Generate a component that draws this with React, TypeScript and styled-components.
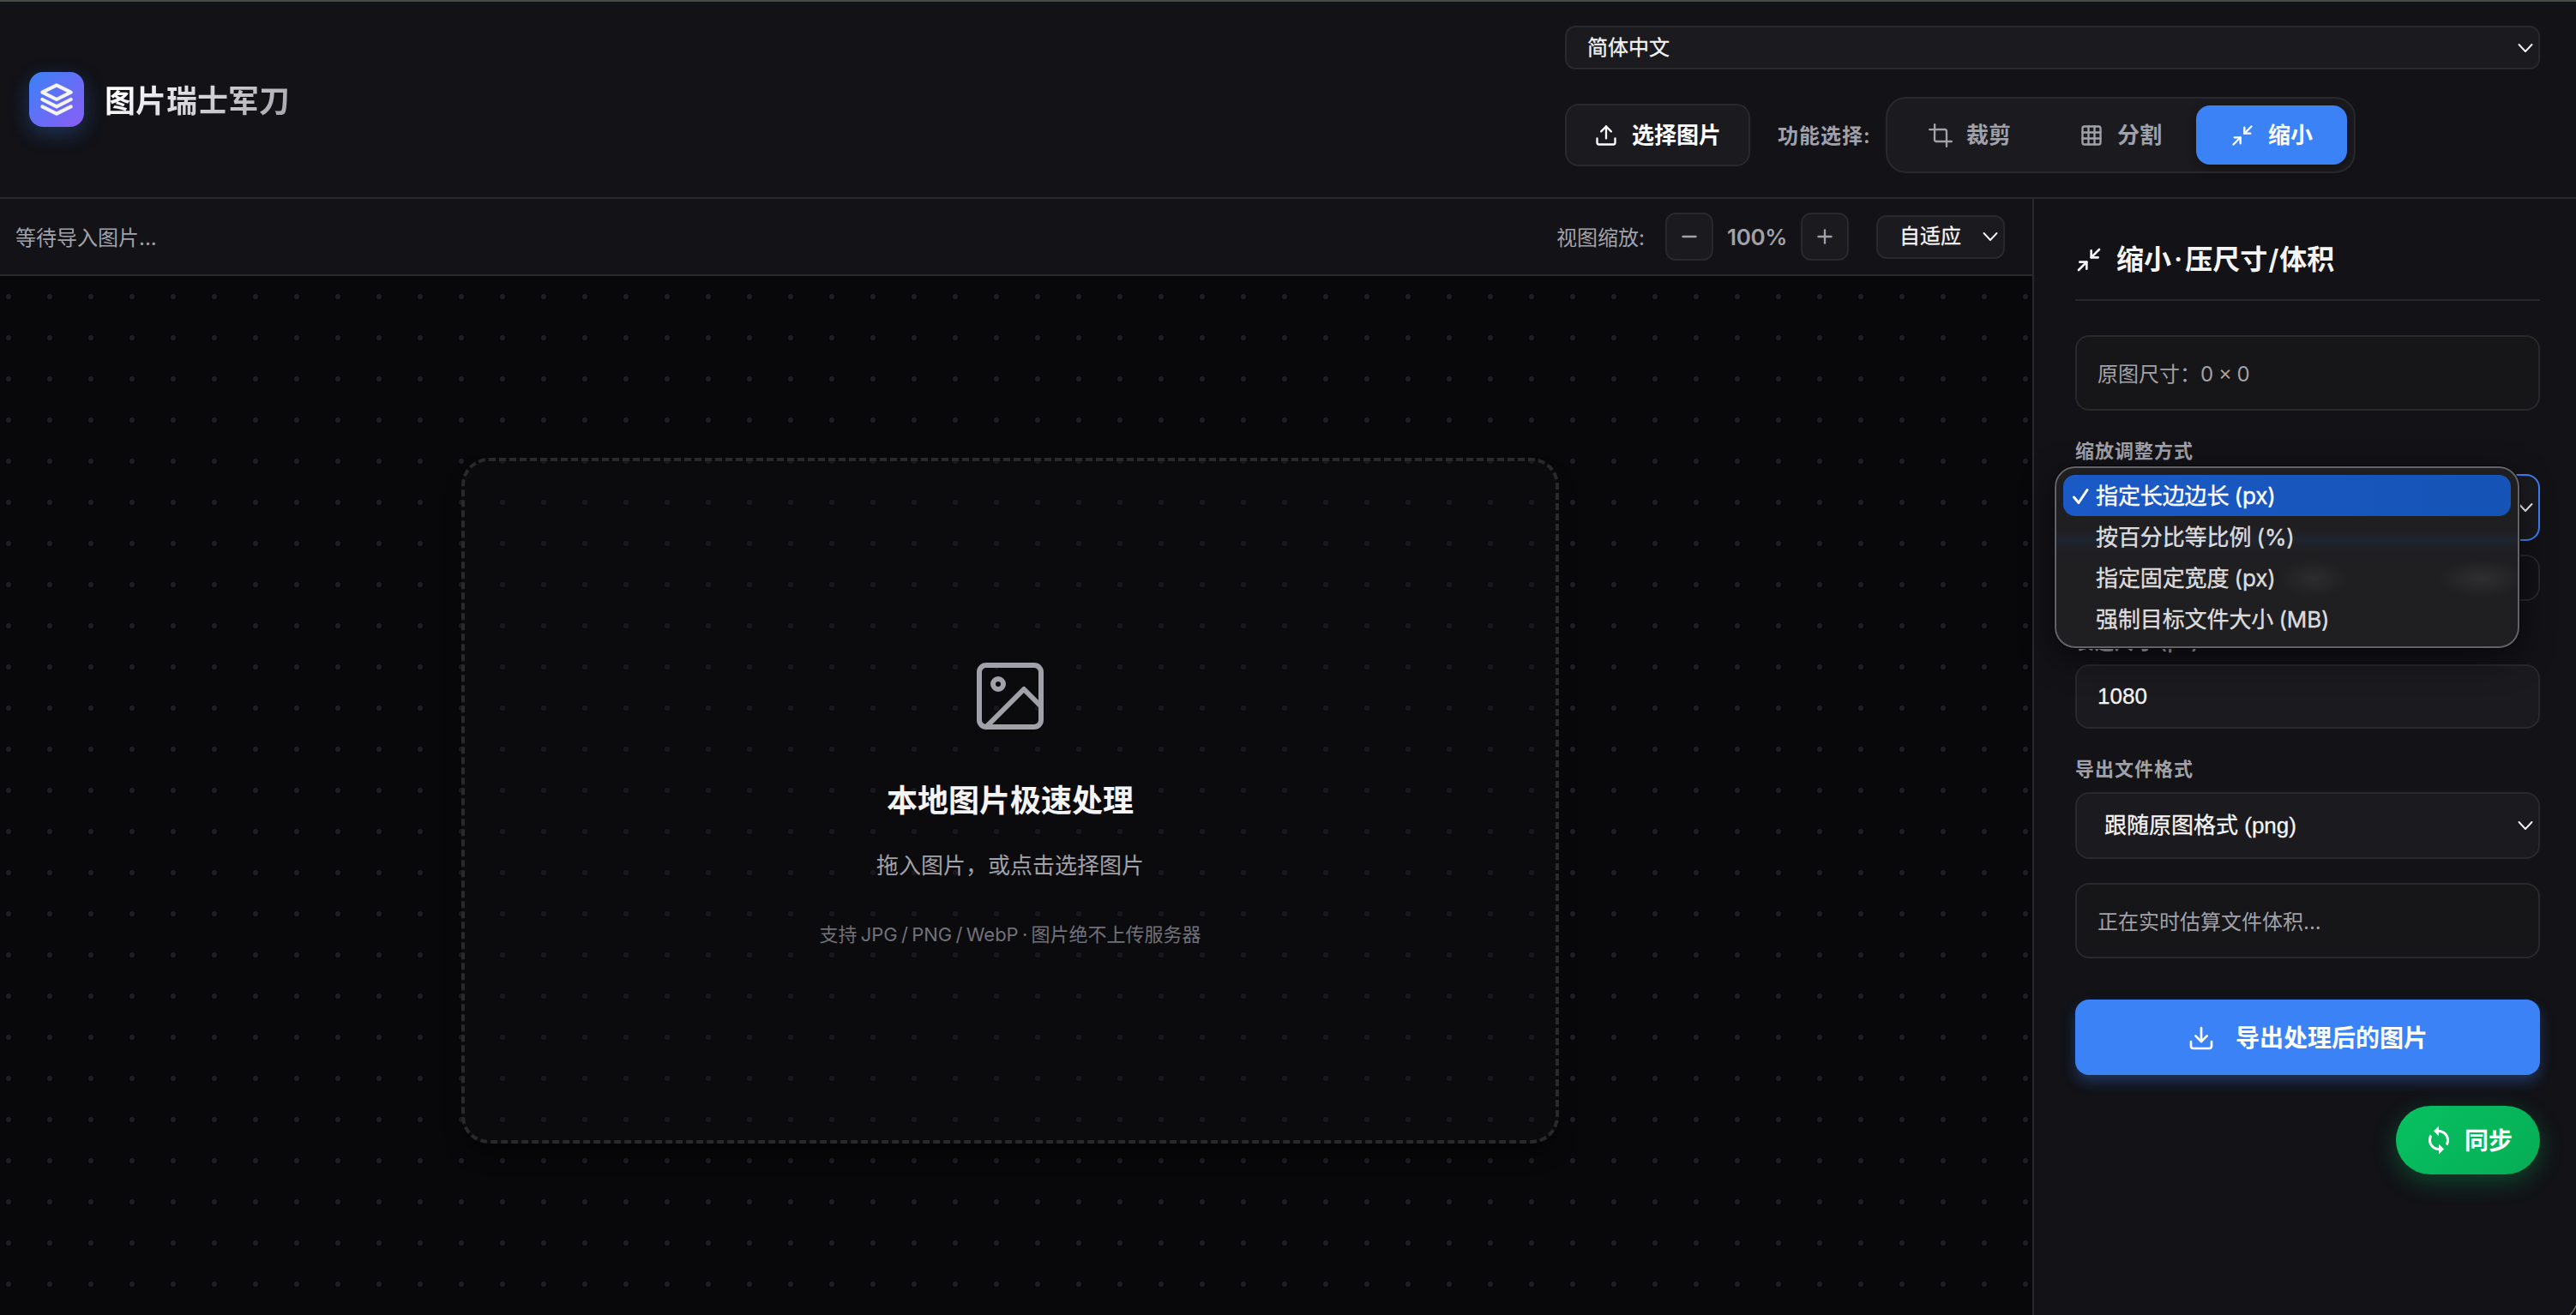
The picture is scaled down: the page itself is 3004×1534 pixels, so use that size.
import React from "react";
import styled, { createGlobalStyle, css } from "styled-components";

const UI = `Inter, "Noto Sans CJK SC", sans-serif`;
const CONTROL = `"Liberation Sans", "Noto Sans CJK SC", sans-serif`;

const c = {
  bg: "#08080a",
  panel: "#121217",
  control: "#1b1b1f",
  info: "#161618",
  line: "#29292c",
  text: "#f4f4f5",
  muted: "#a1a1aa",
  faint: "#71717a",
  accent: "#3b82f6",
};

const GlobalStyle = createGlobalStyle`
  *, *::before, *::after { box-sizing: border-box; }
  body { margin: 0; background: ${c.bg}; color: ${c.text}; font-family: ${UI}; overflow: hidden; }
  button, input { font-family: inherit; margin: 0; }
`;

const Page = styled.div`
  width: 3004px;
  height: 1534px;
  display: flex;
  flex-direction: column;
  overflow: hidden;
  border-top: 2px solid #454c42;
  position: relative;
`;

const Header = styled.header`
  height: 230px;
  flex: none;
  display: flex;
  justify-content: space-between;
  background: ${c.panel};
  border-bottom: 2px solid ${c.line};
  padding: 28px 42px 28px 34px;
`;

const Brand = styled.div`
  display: flex;
  align-items: center;
  align-self: center;
  gap: 24px;
`;

const LogoTile = styled.div`
  width: 64px;
  height: 64px;
  border-radius: 16px;
  display: grid;
  place-items: center;
  background: linear-gradient(135deg, #3b82f6, #8b5cf6);
  box-shadow: 0 8px 24px rgba(59, 130, 246, 0.3);
`;

const BrandName = styled.h1`
  margin: 0;
  padding-top: 3px;
  font-size: 36px;
  line-height: 54px;
  font-weight: 600;
  background: linear-gradient(135deg, #ffffff 10%, ${c.muted});
  -webkit-background-clip: text;
  background-clip: text;
  color: transparent;
`;

const HeaderTools = styled.div`
  width: 1137px;
  display: flex;
  flex-direction: column;
  gap: 32px;
`;

const ToolRow = styled.div`
  display: flex;
  align-items: center;
`;

const Select = styled.div<{ $h: number; $pad: number; $size?: number; $radius?: number; $focus?: boolean; $w?: string }>`
  display: flex;
  align-items: center;
  justify-content: space-between;
  flex: none;
  width: ${(p) => p.$w ?? "100%"};
  height: ${(p) => p.$h}px;
  padding: 0 6px 0 ${(p) => p.$pad}px;
  border: 2px solid ${(p) => (p.$focus ? c.accent : c.line)};
  border-radius: ${(p) => p.$radius ?? 16}px;
  background: ${c.control};
  color: ${c.text};
  font-family: ${CONTROL};
  font-size: ${(p) => p.$size ?? 26}px;
  line-height: 40px;
  -webkit-text-stroke: 0.3px currentColor;
`;

const PickButton = styled.button`
  height: 73px;
  display: flex;
  align-items: center;
  gap: 16px;
  padding: 1px 32px 0;
  border: 2px solid ${c.line};
  border-radius: 16px;
  background: ${c.control};
  color: #fff;
  font-size: 26px;
  line-height: 40px;
  font-weight: 600;
`;

const ToolLabel = styled.span`
  width: 158px;
  padding: 2px 0 0 32px;
  white-space: nowrap;
  font-size: 24px;
  line-height: 36px;
  letter-spacing: 1px;
  font-weight: 600;
  color: ${c.muted};
`;

const Segments = styled.div`
  display: flex;
  padding: 8px;
  border: 2px solid ${c.line};
  border-radius: 24px;
  background: ${c.control};
`;

const Segment = styled.button<{ $active?: boolean }>`
  width: 176px;
  height: 69px;
  display: flex;
  align-items: center;
  justify-content: center;
  gap: 16px;
  padding: 1px 0 0;
  border: 0;
  border-radius: 16px;
  background: transparent;
  color: ${c.muted};
  font-size: 26px;
  line-height: 40px;
  font-weight: 600;
  ${(p) =>
    p.$active &&
    css`
      background: ${c.accent};
      color: #fff;
      box-shadow: 0 4px 12px rgba(0, 0, 0, 0.3);
    `}
`;

const Body = styled.div`
  flex: 1;
  min-height: 0;
  display: flex;
`;

const Workspace = styled.main`
  width: 2384px;
  margin-left: -14px;
  flex: none;
  display: flex;
  flex-direction: column;
`;

const Toolbar = styled.div`
  height: 90px;
  flex: none;
  display: flex;
  align-items: center;
  justify-content: space-between;
  padding: 0 32px;
  background: ${c.panel};
  border-bottom: 2px solid ${c.line};
  color: ${c.muted};
  font-size: 24px;
  line-height: 36px;
`;

const Status = styled.span`
  padding-top: 3px;
`;

const ZoomGroup = styled.div`
  display: flex;
  align-items: center;
`;

const ZoomLabel = styled.span`
  width: 127px;
  padding-top: 3px;
`;

const ZoomButton = styled.button`
  width: 56px;
  height: 56px;
  display: grid;
  place-items: center;
  padding: 0;
  border: 2px solid ${c.line};
  border-radius: 12px;
  background: ${c.control};
  color: ${c.muted};
`;

const ZoomValue = styled.span`
  width: 102px;
  padding-top: 2px;
  text-align: center;
  font-size: 26px;
  font-weight: 600;
  letter-spacing: -0.4px;
`;

const FitWrap = styled.div`
  margin-left: 32px;
`;

const Canvas = styled.section`
  height: 1224px;
  flex: none;
  display: grid;
  place-items: center;
  background: radial-gradient(circle, #1e1e24 2.7px, transparent 3.3px) 0 0 / 48px 48px ${c.bg};
`;

const DropZone = styled.div`
  width: 1280px;
  height: 800px;
  display: flex;
  flex-direction: column;
  align-items: center;
  padding-top: 226px;
  border: 4px dashed ${c.line};
  border-radius: 32px;
  background: rgba(18, 18, 20, 0.4);
  box-shadow: 0 16px 24px -8px rgba(0, 0, 0, 0.6);
`;

const DropTitle = styled.h2`
  margin: 47px 0 0;
  font-size: 36px;
  line-height: 54px;
  font-weight: 600;
`;

const DropText = styled.p`
  margin: 29px 0 0;
  font-size: 26px;
  line-height: 40px;
  color: ${c.muted};
`;

const DropHint = styled.p`
  margin: 43px 0 0;
  font-size: 22px;
  line-height: 34px;
  word-spacing: -1.9px;
  color: ${c.faint};
`;

const Sidebar = styled.aside`
  flex: 1;
  display: flex;
  flex-direction: column;
  padding: 0 42px 0 48px;
  border-left: 2px solid ${c.line};
  background: ${c.panel};
`;

const PanelTitle = styled.h2`
  height: 119px;
  flex: none;
  margin: 0 0 40px;
  display: flex;
  align-items: center;
  gap: 16px;
  padding-top: 24px;
  border-bottom: 2px solid ${c.line};
  font-size: 32px;
  line-height: 48px;
  font-weight: 600;
`;

const Dot = styled.span`
  margin: 0 3px;
`;

const Slash = styled.span`
  margin: 0 1px;
`;

const Info = styled.div`
  height: 88px;
  flex: none;
  display: flex;
  align-items: center;
  padding: 3px 24px 0;
  border: 2px solid ${c.line};
  border-radius: 16px;
  background: ${c.info};
  color: ${c.muted};
  font-size: 24px;
  line-height: 36px;
  white-space: pre;
  word-spacing: -1px;
`;

const Field = styled.div<{ $top: number }>`
  display: flex;
  flex-direction: column;
  margin-top: ${(p) => p.$top}px;
`;

const FieldLabel = styled.label<{ $gap: number }>`
  font-size: 22px;
  line-height: 34px;
  letter-spacing: 1px;
  font-weight: 600;
  color: ${c.muted};
  margin-bottom: ${(p) => p.$gap}px;
`;

const Presets = styled.div`
  height: 54px;
  margin-top: 16px;
  border: 2px solid ${c.line};
  border-radius: 16px;
`;

const NumberInput = styled.input`
  width: 100%;
  height: 75px;
  padding: 0 24px;
  border: 2px solid ${c.line};
  border-radius: 16px;
  background: ${c.control};
  color: ${c.text};
  font-family: ${CONTROL};
  font-size: 26px;
  -webkit-text-stroke: 0.3px currentColor;
`;

const ExportButton = styled.button`
  height: 88px;
  flex: none;
  margin-top: 48px;
  display: flex;
  align-items: center;
  justify-content: center;
  gap: 24px;
  padding: 1px 0 0;
  border: 0;
  border-radius: 16px;
  background: ${c.accent};
  color: #fff;
  font-size: 28px;
  line-height: 42px;
  font-weight: 600;
  box-shadow: 0 8px 16px rgba(59, 130, 246, 0.3);
`;

const SyncButton = styled.button`
  height: 80px;
  flex: none;
  align-self: flex-end;
  margin-top: 36px;
  display: flex;
  align-items: center;
  gap: 12px;
  padding: 0 32px;
  border: 0;
  border-radius: 40px;
  background: linear-gradient(135deg, #07c160, #06ad56);
  color: #fff;
  font-size: 28px;
  line-height: 42px;
  font-weight: 600;
  box-shadow: 0 8px 28px rgba(7, 193, 96, 0.3);
`;

const SyncText = styled.span`
  padding-top: 2px;
`;

const Anchor = styled.div`
  position: relative;
`;

const Menu = styled.ul`
  position: absolute;
  z-index: 5;
  left: -24px;
  top: -9px;
  width: 542px;
  height: 212px;
  margin: 0;
  padding: 8px;
  list-style: none;
  border: 2px solid #626267;
  border-radius: 24px;
  background:
    radial-gradient(ellipse 40px 22px at 300px 129px, rgba(255, 255, 255, 0.06), transparent),
    radial-gradient(ellipse 52px 22px at 496px 129px, rgba(255, 255, 255, 0.07), transparent),
    linear-gradient(transparent 70px, rgba(30, 60, 120, 0.16) 84px, transparent 98px),
    #1f1f21;
  box-shadow: 0 0 0 1px #050506, 0 12px 40px rgba(0, 0, 0, 0.45);
`;

const MenuItem = styled.li<{ $selected?: boolean }>`
  height: 48px;
  display: flex;
  align-items: center;
  padding: 2px 0 0 10px;
  border-radius: 14px;
  font-size: 26px;
  line-height: 40px;
  letter-spacing: -0.1px;
  word-spacing: -1px;
  -webkit-text-stroke: 0.4px currentColor;
  color: ${(p) => (p.$selected ? "#fff" : "#dcdcdd")};
  background: ${(p) => (p.$selected ? "linear-gradient(90deg, #1b5ac6, #1653b6)" : "transparent")};
`;

const CheckSlot = styled.span`
  width: 28px;
  display: flex;
`;

const WindowCorner = styled.svg`
  position: absolute;
  right: 0;
  bottom: 0;
`;

type IconProps = { size: number; stroke?: number; children: React.ReactNode };
const Icon = ({ size, stroke = 2, children }: IconProps) => (
  <svg width={size} height={size} viewBox="0 0 24 24" fill="none" stroke="currentColor" strokeWidth={stroke} strokeLinecap="round" strokeLinejoin="round">
    {children}
  </svg>
);

const ShrinkPaths = () => (
  <>
    <polyline points="4 14 10 14 10 20" />
    <polyline points="20 10 14 10 14 4" />
    <line x1="14" y1="10" x2="21" y2="3" />
    <line x1="3" y1="21" x2="10" y2="14" />
  </>
);

const Chevron = () => (
  <svg width="18" height="12" viewBox="0 0 18 12" fill="none" stroke="#f4f4f5" strokeWidth="1.9" strokeLinecap="round" strokeLinejoin="round">
    <path d="M1.5 2 L9 10 L16.5 2" />
  </svg>
);

const options = ["指定长边边长 (px)", "按百分比等比例 (%)", "指定固定宽度 (px)", "强制目标文件大小 (MB)"];

export default function App() {
  return (
    <Page>
      <GlobalStyle />
      <Header>
        <Brand>
          <LogoTile>
            <Icon size={40} stroke={2.5}>
              <polygon points="12 2 2 7 12 12 22 7 12 2" />
              <polyline points="2 17 12 22 22 17" />
              <polyline points="2 12 12 17 22 12" />
            </Icon>
          </LogoTile>
          <BrandName>图片瑞士军刀</BrandName>
        </Brand>
        <HeaderTools>
          <Select $h={51} $pad={24} $size={24} $radius={12}>
            简体中文
            <Chevron />
          </Select>
          <ToolRow>
            <PickButton>
              <Icon size={28}>
                <path d="M21 15v4a2 2 0 0 1-2 2H5a2 2 0 0 1-2-2v-4" />
                <polyline points="17 8 12 3 7 8" />
                <line x1="12" y1="3" x2="12" y2="15" />
              </Icon>
              选择图片
            </PickButton>
            <ToolLabel>功能选择:</ToolLabel>
            <Segments>
              <Segment>
                <Icon size={28}>
                  <path d="M6.13 1 6 16a2 2 0 0 0 2 2h15" />
                  <path d="M1 6.13 16 6a2 2 0 0 1 2 2v15" />
                </Icon>
                裁剪
              </Segment>
              <Segment>
                <Icon size={28}>
                  <rect x="3" y="3" width="18" height="18" rx="2" />
                  <path d="M3 9h18M3 15h18M9 3v18M15 3v18" />
                </Icon>
                分割
              </Segment>
              <Segment $active>
                <Icon size={28}>
                  <ShrinkPaths />
                </Icon>
                缩小
              </Segment>
            </Segments>
          </ToolRow>
        </HeaderTools>
      </Header>

      <Body>
        <Workspace>
          <Toolbar>
            <Status>等待导入图片...</Status>
            <ZoomGroup>
              <ZoomLabel>视图缩放:</ZoomLabel>
              <ZoomButton>
                <Icon size={28}>
                  <line x1="5.5" y1="12" x2="18.5" y2="12" />
                </Icon>
              </ZoomButton>
              <ZoomValue>100%</ZoomValue>
              <ZoomButton>
                <Icon size={28}>
                  <line x1="12" y1="5.5" x2="12" y2="18.5" />
                  <line x1="5.5" y1="12" x2="18.5" y2="12" />
                </Icon>
              </ZoomButton>
              <FitWrap>
                <Select $h={51} $pad={25} $size={24} $radius={12} $w="150px">
                  自适应
                  <Chevron />
                </Select>
              </FitWrap>
            </ZoomGroup>
          </Toolbar>
          <Canvas>
            <DropZone>
              <svg width="96" height="96" viewBox="0 0 24 24" fill="none" stroke={c.muted} strokeWidth="1.5" strokeLinecap="round" strokeLinejoin="round">
                <rect x="3" y="3" width="18" height="18" rx="2" />
                <circle cx="8.5" cy="8.5" r="1.5" />
                <polyline points="21 15 16 10 5 21" />
              </svg>
              <DropTitle>本地图片极速处理</DropTitle>
              <DropText>拖入图片，或点击选择图片</DropText>
              <DropHint>支持 JPG / PNG / WebP · 图片绝不上传服务器</DropHint>
            </DropZone>
          </Canvas>
        </Workspace>

        <Sidebar>
          <PanelTitle>
            <Icon size={32}>
              <ShrinkPaths />
            </Icon>
            <span>
              缩小<Dot>·</Dot>压尺寸<Slash>/</Slash>体积
            </span>
          </PanelTitle>
          <Info>原图尺寸：0 × 0</Info>
          <Field $top={30}>
            <FieldLabel $gap={10}>缩放调整方式</FieldLabel>
            <Anchor>
              <Select $h={78} $pad={32} $focus>
                <span />
                <Chevron />
              </Select>
              <Menu>
                {options.map((label, i) => (
                  <MenuItem key={label} $selected={i === 0}>
                    <CheckSlot>
                      {i === 0 && (
                        <svg width="21" height="21" viewBox="0 0 21 21" fill="none" stroke="#fff" strokeWidth="3" strokeLinecap="round" strokeLinejoin="round">
                          <path d="M2.5 11 L8 17.5 L18 2.5" />
                        </svg>
                      )}
                    </CheckSlot>
                    {label}
                  </MenuItem>
                ))}
              </Menu>
            </Anchor>
            <Presets />
          </Field>
          <Field $top={31}>
            <FieldLabel $gap={9}>长边尺寸 (px)</FieldLabel>
            <NumberInput defaultValue="1080" />
          </Field>
          <Field $top={30}>
            <FieldLabel $gap={10}>导出文件格式</FieldLabel>
            <Select $h={78} $pad={32}>
              跟随原图格式 (png)
              <Chevron />
            </Select>
          </Field>
          <Field $top={28}>
            <Info>正在实时估算文件体积...</Info>
          </Field>
          <ExportButton>
            <Icon size={32}>
              <path d="M21 15v4a2 2 0 0 1-2 2H5a2 2 0 0 1-2-2v-4" />
              <polyline points="7 10 12 15 17 10" />
              <line x1="12" y1="15" x2="12" y2="3" />
            </Icon>
            导出处理后的图片
          </ExportButton>
          <SyncButton>
            <svg width="36" height="36" viewBox="0 0 24 24" fill="currentColor">
              <path d="M12 4V1L8 5l4 4V6c3.31 0 6 2.69 6 6 0 1.01-.25 1.97-.7 2.8l1.46 1.46C19.54 15.03 20 13.57 20 12c0-4.42-3.58-8-8-8zm0 14c-3.31 0-6-2.69-6-6 0-1.01.25-1.97.7-2.8L5.24 7.74C4.46 8.97 4 10.43 4 12c0 4.42 3.58 8 8 8v3l4-4-4-4v3z" />
            </svg>
            <SyncText>同步</SyncText>
          </SyncButton>
        </Sidebar>
      </Body>
      <WindowCorner width="8" height="12" viewBox="0 0 8 12" fill="none">
        <path d="M8 1 Q6 7 1 12 H8 Z" fill="#0b0b0c" />
        <path d="M8 1 Q6 7 1 12" stroke="#6a6a6c" strokeWidth="1.5" />
      </WindowCorner>
    </Page>
  );
}
